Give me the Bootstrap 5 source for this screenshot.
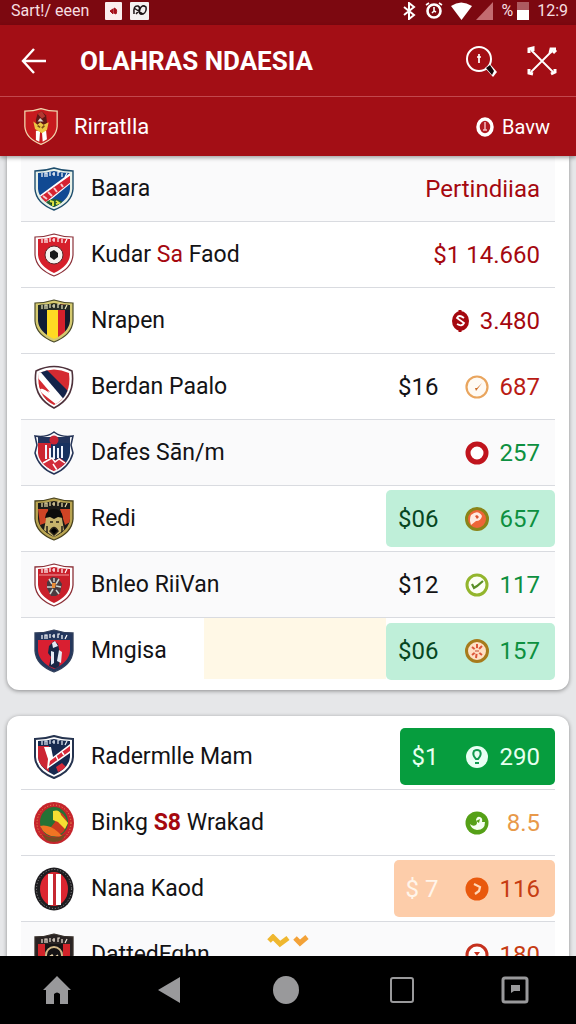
<!DOCTYPE html>
<html lang="id">
<head>
<meta charset="utf-8">
<meta name="viewport" content="width=device-width, initial-scale=1">
<title>Olahras Ndaesia</title>
<link href="https://cdn.jsdelivr.net/npm/bootstrap@5.3.0/dist/css/bootstrap.min.css" rel="stylesheet">
<style>
  body { font-family: Roboto, "Liberation Sans", sans-serif; background: #e6e7e9; color: #131315; }
  svg { display: block; flex: none; }
  .status-strip { background: #7c0810; color: #f6dfe0; height: 25px; padding: 0 8px 4px 11px; font-size: 16px; line-height: 20px; }
  .app-head { background: #a30e15; color: #fff; box-shadow: 0 2px 4px rgba(0,0,0,.35); z-index: 2; }
  .tool-row { height: 72px; padding: 0 18px 0 20px; border-bottom: 1px solid #c2474d; }
  .tool-row h1 { font-size: 26px; font-weight: 700; line-height: 36px; padding-left: 34px; }
  .search-btn { margin-right: 28px; }
  .league-row { height: 59px; padding: 0 26px 0 24px; font-size: 22px; }
  .league-row span { margin-left: 16px; }
  .league-row a { font-size: 20px; }
  .plain-btn { border: 0; background: none; color: inherit; padding: 0; }
  .feed { min-height: 0; scrollbar-width: none; padding: 0 7px; }
  .panel { background: #fff; border-radius: 12px; padding: 8px 14px; margin-bottom: 26px; box-shadow: 0 1px 4px rgba(0,0,0,.4); }
  .panel-first { border-top-left-radius: 0; border-top-right-radius: 0; padding-top: 0; padding-bottom: 6px; }
  .club { height: 66px; padding-left: 13px; border-bottom: 1px solid #d9dbe0; font-size: 23px; line-height: 30px; white-space: nowrap; }
  .club:last-child { border-bottom: 0; }
  .shade { background: #fafafb; }
  .club-name { margin-left: 17px; }
  .amount { height: 57px; border-radius: 5px; padding: 0 15px 0 12px; font-size: 24px; }
  .amount svg { margin-right: 11px; }
  .price { margin-right: 26px; }
  .score { min-width: 40px; text-align: right; }
  .red { color: #a5080f; }
  .green { color: #0d9040; }
  .amber { color: #e8994a; }
  .rust { color: #c63c12; }
  .pill-mint { background: #bfefd9; }
  .pill-mint .price { color: #06461f; }
  .pill-green { background: #069d3e; color: #e6fff0; }
  .pill-peach { background: #fdcdaa; }
  .pill-peach .price { color: #fff5ea; }
  .cream { flex: 0 0 35%; height: 61px; background: #fff8e6; }
  .spark { margin-left: 57px; margin-top: 12px; }
  .system-nav { background: #000; height: 68px; color: #99999b; }
</style>
</head>
<body>
<svg width="0" height="0" class="position-absolute" aria-hidden="true">
  <defs>
    <path id="shield" d="M1 4Q11 4 20 1Q29 4 39 4V22Q38 36 20 43Q2 36 1 22Z"/>
    <clipPath id="inside"><path d="M4 6Q12 6 20 4Q28 6 36 6V22Q35 33 20 40Q5 33 4 22Z"/></clipPath>
    <path id="marks" d="M8 10V6M11 10V6h2v4M16 9V5M18 7h3M20 5v4M24 9V5h2M28 10V6M31 10l2-4" fill="none" stroke-width="1.200"/>
  </defs>
</svg>

<div class="vh-100 d-flex flex-column overflow-hidden">
  <div class="status-strip d-flex align-items-center flex-shrink-0">
    <span>Sart!/ eeen</span>
    <svg class="ms-3" width="17" height="18" viewBox="0 0 17 18"><rect width="17" height="18" rx="1" fill="#fbeeee"/><path d="M5 9l3-2v5zM9 6q4 1 2 6l-2-1z" fill="#a4101a" stroke="#a4101a"/></svg>
    <svg class="ms-2" width="20" height="18" viewBox="0 0 20 18"><rect width="19" height="18" rx="1" fill="#f5f1f1"/><path d="M4 12Q3 3 8 4Q12 6 6 12M4 6l9 6q4-2 3-7q-4-3-6 2q-2 6 3 5" fill="none" stroke="#1d1416" stroke-width="1.500"/></svg>
    <div class="d-flex align-items-center ms-auto">
      <svg width="15" height="18" viewBox="0 0 15 18"><path d="M2 5l10 8-5 4V1l5 4-10 8" fill="none" stroke="#fff" stroke-width="2"/></svg>
      <svg class="ms-2" width="18" height="18" viewBox="0 0 18 18"><circle cx="9" cy="9" r="6.500" fill="none" stroke="#fff" stroke-width="2.600"/><path d="M1 3l3-2M14 1l3 2M9 5v4l-2 2M9 9l2 1" stroke="#fff" stroke-width="1.600"/></svg>
      <svg class="ms-2" width="21" height="18" viewBox="0 0 21 18"><path d="M0 4Q10-3 21 4L10.500 18Z" fill="#fff"/></svg>
      <svg class="ms-1" width="17" height="18" viewBox="0 0 17 18"><path d="M17 0V18H0Z" fill="#c36b70"/></svg>
      <span class="ms-2">%</span>
      <svg class="ms-1 me-2" width="12" height="18" viewBox="0 0 12 18"><path d="M0 0h12v10H0z" fill="#ad5b60"/><path d="M0 8h12v10H0z" fill="#fff"/></svg>
      <span>12:9</span>
    </div>
  </div>

  <header class="app-head position-relative flex-shrink-0">
    <div class="tool-row d-flex align-items-center">
      <button class="plain-btn" type="button" aria-label="Kembali"><svg width="26" height="28" viewBox="0 0 26 28"><path d="M14 2L3 14l11 12M3 14h23" fill="none" stroke="#fff" stroke-width="2.400"/></svg></button>
      <h1 class="mb-0 flex-fill">OLAHRAS NDAESIA</h1>
      <button class="plain-btn search-btn" type="button" aria-label="Cari"><svg width="34" height="34" viewBox="0 0 34 34"><circle cx="15" cy="15" r="12" fill="none" stroke="#fff" stroke-width="2"/><path d="M15 10v9M13 13h4" stroke="#fff" stroke-width="1.700"/><path d="M21 24l5-4 7 8-4 5z" fill="#fff"/><path d="M22 24l4-3 4 6-2 4z" fill="#16080a"/></svg></button>
      <button class="plain-btn" type="button" aria-label="Alat"><svg width="32" height="32" viewBox="0 0 32 32"><path d="M5 5L27 27M5 27L27 5" stroke="#fff" stroke-width="1.800"/><path d="M3 8V4l4-1v3M24 8l1-4h5M27 8l3-3M3 24v4l4 1M29 24v3l-4 2" fill="none" stroke="#fff" stroke-width="3"/></svg></button>
    </div>
    <div class="league-row d-flex align-items-center">
      <svg width="34" height="39" viewBox="0 0 40 44"><use href="#shield" fill="#c71a1e" stroke="#f1d6ae" stroke-width="1.500"/><path d="M14 27h5l-1 13-4-2zM21 27h5l1 10-5 3z" fill="#fff"/><path d="M14 14l2-7 5-3 5 5 1 8-3 6H15z" fill="#5e1715"/><path d="M11 16l5 4 3-3 4 3 6-3-2 9-6 4-8-5z" fill="#ebc744"/><path d="M16 7l5-3 4 6-4 3z" fill="#b43730"/><path d="M16 16l3-4 4 4z" fill="#ddd4cb"/><path d="M16 21l3 2M24 21l-3 3" stroke="#7f4c19" stroke-width="2"/></svg>
      <span>Rirratlla</span>
      <a href="#bavw" class="d-flex align-items-center ms-auto text-white text-decoration-none"><svg class="me-2" width="18" height="20" viewBox="0 0 18 20"><ellipse cx="9" cy="10" rx="7" ry="8" fill="#b01b22" stroke="#fff" stroke-width="3.500"/><path d="M9 5v8M7 13h4" stroke="#f3bcc0" stroke-width="1.500"/></svg>Bavw</a>
    </div>
  </header>

  <main class="feed flex-fill overflow-auto">
    <ul class="panel panel-first list-unstyled">
      <li class="club shade d-flex align-items-center">
        <svg width="40" height="44" viewBox="0 0 40 44"><use href="#shield" fill="#e9f1e8" stroke="#1d4d6d" stroke-width="1.400"/><g clip-path="url(#inside)"><path d="M0 0h40v44H0z" fill="#114a93"/><path d="M1 32L36 6v11L9 39z" fill="#fff"/><path d="M2 33L37 8v7L8 38z" fill="#d52331"/><path d="M9 29l4 3M14 25l4 4M20 21l3 4M27 17l2 3" stroke="#f7c9cc" stroke-width="2"/><path d="M11 36q9-8 19 0l-10 6z" fill="#24602f"/><path d="M16 34l3 1v4M22 34l3 2-3 1" stroke="#dbe245" stroke-width="2"/></g><use href="#marks" stroke="#fff"/></svg>
        <span class="club-name">Baara</span>
        <span class="amount red d-flex align-items-center ms-auto">Pertindiiaa</span>
      </li>
      <li class="club d-flex align-items-center">
        <svg width="40" height="44" viewBox="0 0 40 44"><use href="#shield" fill="#fff" stroke="#8c3139" stroke-width="1.200"/><g clip-path="url(#inside)"><path d="M0 0h40v44H0z" fill="#d61f2b"/></g><use href="#marks" stroke="#fff"/><circle cx="20" cy="22" r="9" fill="#f5f1ef" stroke="#59282b"/><path d="M16 19l4-2 4 3v4l-4 3-4-3z" fill="#191719"/></svg>
        <span class="club-name">Kudar <span class="red">Sa</span> Faod</span>
        <span class="amount red d-flex align-items-center ms-auto">$1 14.660</span>
      </li>
      <li class="club d-flex align-items-center">
        <svg width="40" height="44" viewBox="0 0 40 44"><use href="#shield" fill="#d5ca70" stroke="#4b4b2b" stroke-width="1.200"/><g clip-path="url(#inside)"><path d="M0 0h13v44H0z" fill="#101a35"/><path d="M13 0h11v44H13z" fill="#ffda23"/><path d="M24 0h7v44h-7z" fill="#d4202b"/><path d="M31 0h9v44h-9z" fill="#14192b"/><path d="M0 0h40v11H0z" fill="#242b24"/></g><use href="#marks" stroke="#edebc4"/></svg>
        <span class="club-name">Nrapen</span>
        <span class="amount red d-flex align-items-center ms-auto"><svg width="17" height="22" viewBox="0 0 17 22"><path d="M8 0v22" stroke="#a5080f" stroke-width="3"/><ellipse cx="8.500" cy="11" rx="8.500" ry="10" fill="#a5080f"/><path d="M12 8Q7 4 5 8l7 5q-2 4-7 1" fill="none" stroke="#fff" stroke-width="1.800"/></svg>3.480</span>
      </li>
      <li class="club d-flex align-items-center">
        <svg width="40" height="44" viewBox="0 0 40 44"><path d="M2 6Q20-3 38 6Q42 32 20 43Q-2 32 2 6Z" fill="#fff" stroke="#4e313b" stroke-width="1.600"/><path id="round" d="M5 8Q20 1 35 8Q38 31 20 40Q2 31 5 8Z" fill="#d52a31"/><clipPath id="roundClip"><use href="#round"/></clipPath><g clip-path="url(#roundClip)"><path d="M2 2L10 3 40 33 28 44 4 25 9 23 15 28 4 14z" fill="#fff"/><path d="M4 4l8 0 28 28-7 6z" fill="#142349"/><path d="M3 25l16 16H4z" fill="#611d25"/><path d="M4 13l12 14-12-5z" fill="#d52a31"/></g></svg>
        <span class="club-name">Berdan Paalo</span>
        <span class="amount d-flex align-items-center ms-auto"><span class="price">$16</span><svg width="24" height="26" viewBox="0 0 24 26"><circle cx="12" cy="13" r="10.500" fill="#fffaf3" stroke="#e9a55e" stroke-width="2.200"/><path d="M10 14l1 3 6-8-5 5z" fill="#cc6c25"/></svg><span class="score" style="color:#b91b14">687</span></span>
      </li>
      <li class="club shade d-flex align-items-center">
        <svg width="40" height="44" viewBox="0 0 40 44"><path d="M1 5Q12 7 20 1Q28 7 39 5L37 14 39 22Q35 37 20 43Q5 37 1 22L3 14Z" fill="#f8f8fa" stroke="#243356" stroke-width="1.500"/><g clip-path="url(#inside)"><path d="M4 10h16v30H4z" fill="#cc2531"/><path d="M17 10h22v29H17z" fill="#18315f"/><path d="M4 6h32v6H4z" fill="#23345d"/><circle cx="20" cy="9" r="4.500" fill="#c82435"/><path d="M12 14v14M16 17v10M20 15v13M24 17v10M28 15v12" stroke="#f0f4ff" stroke-width="2"/><path d="M7 33l9-6 5 2 5-2 10 7-16 8z" fill="#d22d3b"/><path d="M9 32l9-5 3 4 4-3 6 4M19 33l4 6" fill="none" stroke="#fff" stroke-width="1.500"/></g></svg>
        <span class="club-name">Dafes Sān/m</span>
        <span class="amount d-flex align-items-center ms-auto"><svg width="24" height="26" viewBox="0 0 24 26"><circle cx="12" cy="13" r="9" fill="#fff" stroke="#c0141d" stroke-width="5"/></svg><span class="score green">257</span></span>
      </li>
      <li class="club d-flex align-items-center">
        <svg width="40" height="44" viewBox="0 0 40 44"><use href="#shield" fill="#b9a451" stroke="#48421e" stroke-width="1.300"/><g clip-path="url(#inside)"><path d="M0 0h40v44H0z" fill="#1b1a18"/><path d="M4 12h10v13L6 28zM26 12h10v13l-5 3z" fill="#cf4425"/><path d="M12 22q0-9 8-9t8 9l2 11-10 7-10-7z" fill="#c7b36c"/><path d="M11 21q1-9 9-9t9 9l-5-1-4 2-4-2z" fill="#0d0c0b"/><path d="M16 25h3M22 25h3M16 34q4-7 8 0l-4 4zM13 29v8M28 29v7" stroke="#262018" stroke-width="1.500"/></g><use href="#marks" stroke="#f0dfaa"/></svg>
        <span class="club-name">Redi</span>
        <span class="amount pill-mint d-flex align-items-center ms-auto"><span class="price">$06</span><svg width="24" height="26" viewBox="0 0 24 26"><circle cx="12" cy="13" r="10.500" fill="#ee6538" stroke="#8a8418" stroke-width="3"/><path d="M6 9q7-6 11 1-1 5-6 5l-5 4q-2-6 0-10z" fill="#ffeae1"/><path d="M10 10l2-1 2 2-2 2z" fill="#dc5330"/></svg><span class="score green">657</span></span>
      </li>
      <li class="club shade d-flex align-items-center">
        <svg width="40" height="44" viewBox="0 0 40 44"><use href="#shield" fill="#fff" stroke="#8c3037" stroke-width="1.300"/><g clip-path="url(#inside)"><path d="M0 0h40v44H0z" fill="#c91f2a"/></g><use href="#marks" stroke="#fff"/><path d="M5 12h30" stroke="#f19798"/><path d="M13 19l5-5 6 1 4 6-2 9-4 3h-5l-4-8z" fill="#493b40"/><path d="M15 16l3 5M25 16l-3 5M13 24l5 0M27 24l-5-1M16 31l3-5M25 31l-3-4M20 15v4" stroke="#cbd4cf" stroke-width="1.500"/><path d="M18 20h4l-1 5h-3z" fill="#e98d38"/></svg>
        <span class="club-name">Bnleo RiiVan</span>
        <span class="amount d-flex align-items-center ms-auto"><span class="price">$12</span><svg width="24" height="26" viewBox="0 0 24 26"><circle cx="12" cy="13" r="10" fill="#fcfff4" stroke="#93b52d" stroke-width="3"/><path d="M7 12l2 4 3-2 6-5" fill="none" stroke="#598f25" stroke-width="2.200"/></svg><span class="score green">117</span></span>
      </li>
      <li class="club d-flex align-items-center">
        <svg width="40" height="44" viewBox="0 0 40 44"><use href="#shield" fill="#24375d" stroke="#32405c" stroke-width="1.300"/><g clip-path="url(#inside)"><path d="M0 11h40v33H0z" fill="#d91f31"/><path d="M15 17l5-5 4 3 2 10-1 16-10-4 2-9-3-4z" fill="#192746"/><path d="M18 14l3-2 3 5-5 2zM17 22l3 1v11l-3 2zM25 21l3 2-1 11-4-2z" fill="#e5eaf4"/></g><use href="#marks" stroke="#fff"/></svg>
        <span class="club-name me-auto">Mngisa</span>
        <span class="cream align-self-start"></span>
        <span class="amount pill-mint d-flex align-items-center"><span class="price">$06</span><svg width="24" height="26" viewBox="0 0 24 26"><circle cx="12" cy="13" r="10.500" fill="#ffe0c5" stroke="#a77b1c" stroke-width="3"/><path d="M12 13V6M12 13l5-5M12 13l5 4M12 13l-1 7M12 13l-5 4M12 13L7 9" stroke="#dc5639" stroke-width="2"/><circle cx="12" cy="13" r="3" fill="#ffe0c5"/><path d="M10 13h4" stroke="#c44c31"/></svg><span class="score green">157</span></span>
      </li>
    </ul>

    <ul class="panel list-unstyled">
      <li class="club d-flex align-items-center">
        <svg width="40" height="44" viewBox="0 0 40 44"><use href="#shield" fill="#fff" stroke="#25334f" stroke-width="2"/><g clip-path="url(#inside)"><path d="M0 0h40v44H0z" fill="#17294f"/><path d="M4 11h11v26L4 28z" fill="#cd2433"/><path d="M10 12h7l2 10 17-13v9L13 34l1-10z" fill="#fff"/><path d="M16 26l20-15v5L15 31zM22 32l6-4 5 5-9 4z" fill="#d72939"/><path d="M22 21l2 4M28 17l2 3" stroke="#fff" stroke-width="1.500"/></g><use href="#marks" stroke="#e7edf7"/></svg>
        <span class="club-name">Radermlle Mam</span>
        <span class="amount pill-green d-flex align-items-center ms-auto"><span class="price">$1</span><svg width="24" height="26" viewBox="0 0 24 26"><circle cx="12" cy="13" r="11" fill="#e9fff4"/><path d="M9 7q3-2 6 0 2 4-2 8h-2Q7 11 9 7z" fill="none" stroke="#119a50" stroke-width="2"/><path d="M10 19h4" stroke="#119a50" stroke-width="2"/></svg><span class="score">290</span></span>
      </li>
      <li class="club d-flex align-items-center">
        <svg width="40" height="44" viewBox="0 0 40 44"><ellipse cx="20" cy="22" rx="20" ry="21" fill="#c5252c"/><ellipse cx="20" cy="22" rx="17" ry="18" fill="none" stroke="#e9a052" stroke-dasharray="1 2"/><ellipse cx="20" cy="21" rx="14" ry="15" fill="#257235"/><path d="M19 12q10-4 14 8-1 12-9 14l-7-8 4-5z" fill="#c9391f"/><path d="M19 10q7-2 8 4l7 8-3 6-7-7-5-2z" fill="#f6df32"/><path d="M6 25q9-2 18 6l4 4q-16 3-22-10z" fill="#f07423"/><path d="M8 33q12 7 24 0l-4 6q-8 4-16 0z" fill="#764c22"/></svg>
        <span class="club-name">Binkg <span class="red fw-bold">S8</span> Wrakad</span>
        <span class="amount d-flex align-items-center ms-auto"><svg width="24" height="26" viewBox="0 0 24 26"><circle cx="12" cy="13" r="11.500" fill="#55a017"/><path d="M5 14q3 3 6 1 2-2 0-5 1-4 4-3 3 1 2 5l3 0q0 8-8 8-6-1-7-6z" fill="#f5fff0"/><path d="M11 11l4-2-1 4z" fill="#55a017"/></svg><span class="score amber">8.5</span></span>
      </li>
      <li class="club d-flex align-items-center">
        <svg width="40" height="44" viewBox="0 0 40 44"><ellipse cx="20" cy="22" rx="19.500" ry="21.500" fill="#1e1d20"/><ellipse cx="20" cy="22" rx="17.500" ry="19.500" fill="none" stroke="#999" stroke-dasharray="1 2"/><ellipse cx="20" cy="22" rx="14" ry="17" fill="#dc2630"/><path d="M14 7h5v31h-5zM22 7h5v31h-5z" fill="#fff"/><path d="M19 6h3v33h-3z" fill="#c62731"/></svg>
        <span class="club-name">Nana Kaod</span>
        <span class="amount pill-peach d-flex align-items-center ms-auto"><span class="price">$ 7</span><svg width="24" height="26" viewBox="0 0 24 26"><circle cx="12" cy="13" r="11.500" fill="#e9590d"/><path d="M9 8l6 3-1 4-4 3" fill="none" stroke="#ffd6b5" stroke-width="2.200"/></svg><span class="score rust">116</span></span>
      </li>
      <li class="club shade d-flex align-items-center">
        <svg width="40" height="44" viewBox="0 0 40 44"><use href="#shield" fill="#292323" stroke="#38302a" stroke-width="1.300"/><g clip-path="url(#inside)"><path d="M0 11h40v33H0z" fill="#d2242a"/><path d="M11 11h18v33H11z" fill="#171416"/><circle cx="20" cy="22" r="8" fill="#131113" stroke="#d3b887" stroke-width="2"/><path d="M15 24l3-2 2 3 4-3" fill="none" stroke="#ead6ad" stroke-width="1.500"/></g><use href="#marks" stroke="#f0e5d7"/></svg>
        <span class="club-name">DattedFqhn</span>
        <svg class="spark align-self-start" width="42" height="14" viewBox="0 0 42 14"><path d="M2 7l4-4 7 7 8-6" fill="none" stroke="#efb72f" stroke-width="5"/><path d="M28 4l5 5 7-6" fill="none" stroke="#f3a238" stroke-width="5"/></svg>
        <span class="amount d-flex align-items-center ms-auto"><svg width="24" height="26" viewBox="0 0 24 26"><circle cx="12" cy="13" r="10" fill="#fff" stroke="#c5301d" stroke-width="3"/><path d="M9 10h6l-3 4z" fill="#c5301d"/></svg><span class="score rust">180</span></span>
      </li>
    </ul>
  </main>

  <nav class="system-nav d-flex align-items-center flex-shrink-0 pe-1" aria-label="Sistem">
    <button class="plain-btn flex-fill d-flex justify-content-center" type="button" aria-label="Beranda"><svg width="28" height="28" viewBox="0 0 28 28"><path d="M14 0L28 14h-3v14h-8V18q-3-3-6 0v10H3V14H0z" fill="currentColor"/></svg></button>
    <button class="plain-btn flex-fill d-flex justify-content-center" type="button" aria-label="Mundur"><svg width="28" height="28" viewBox="0 0 28 28"><path d="M22 1v26L0 14z" fill="currentColor"/></svg></button>
    <button class="plain-btn flex-fill d-flex justify-content-center" type="button" aria-label="Pusat"><svg width="28" height="28" viewBox="0 0 28 28"><ellipse cx="14" cy="14" rx="13" ry="14" fill="currentColor"/></svg></button>
    <button class="plain-btn flex-fill d-flex justify-content-center" type="button" aria-label="Terkini"><svg width="28" height="28" viewBox="0 0 28 28"><rect x="5" y="2" width="22" height="24" rx="2" fill="none" stroke="currentColor" stroke-width="2"/></svg></button>
    <button class="plain-btn flex-fill d-flex justify-content-center" type="button" aria-label="Pesan"><svg width="28" height="28" viewBox="0 0 28 28"><rect x="2" y="2" width="24" height="24" rx="2" fill="none" stroke="currentColor" stroke-width="3"/><path d="M10 9h9v6h-6l-3 2z" fill="currentColor"/></svg></button>
  </nav>
</div>
<script src="https://cdn.jsdelivr.net/npm/bootstrap@5.3.0/dist/js/bootstrap.bundle.min.js"></script>
</body>
</html>
